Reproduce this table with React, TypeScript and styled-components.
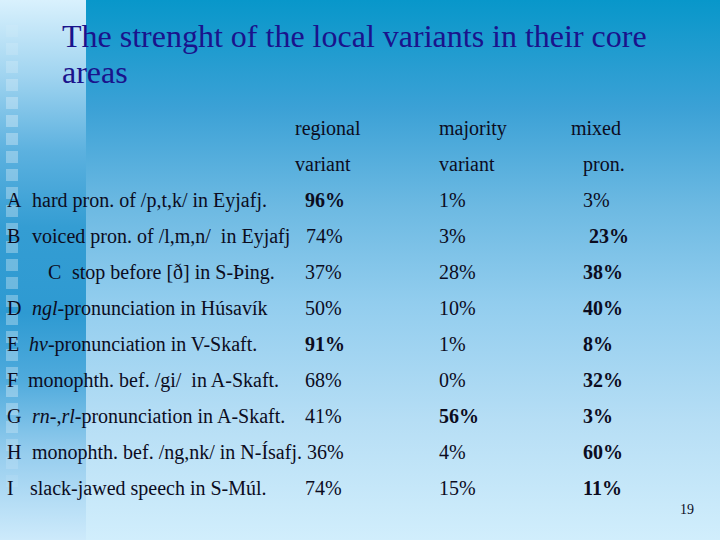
import React, { ReactNode } from 'react';
import styled, { createGlobalStyle } from 'styled-components';

const GlobalStyle = createGlobalStyle`
   html, body {
      margin: 0;
      padding: 0;
      background: #ffffff;
   }
   body {
      font-family: "Liberation Serif", "Times New Roman", serif;
   }
`;

const Slide = styled.div`
   display: grid;
   width: 720px;
   height: 540px;
   overflow: hidden;
   font-family: "Liberation Serif", "Times New Roman", serif;
`;

const Backdrop = styled.div`
   grid-area: 1 / 1;
   display: flex;
`;

const Strip = styled.div`
   width: 86px;
   flex-shrink: 0;
   display: flex;
   flex-direction: column;
   gap: 6px;
   padding: 25px 0 0 6px;
   box-sizing: border-box;
   background: linear-gradient(
      to bottom,
      #d9f1fd 0%,
      #a0d4f0 14%,
      #5cb1df 28%,
      #349dd3 42%,
      #2e9ad2 58%,
      #4eaadc 70%,
      #96cdee 84%,
      #cdeafb 100%
   );
`;

const Square = styled.span<{ $alpha: number }>`
   width: 12px;
   height: 12px;
   flex-shrink: 0;
   background: rgba(255, 255, 255, ${({ $alpha }) => $alpha});
`;

const Main = styled.div`
   flex: 1;
   background: linear-gradient(
      to bottom,
      #0897ca 0%,
      #3ba1d6 20%,
      #6cb9e2 38%,
      #92cdee 56%,
      #b6def5 78%,
      #d1eefc 100%
   );
`;

const Content = styled.div`
   grid-area: 1 / 1;
   position: relative;
   z-index: 1;
   display: flex;
   flex-direction: column;
   padding: 18px 0 0 7px;
`;

const Title = styled.h1`
   margin: 0 0 20px 55px;
   font-size: 32px;
   line-height: 36px;
   font-weight: normal;
   color: #1a138c;
`;

const Table = styled.div`
   display: grid;
   grid-template-columns: 288px 144px 132px 1fr;
   grid-auto-rows: 36px;
   font-size: 20px;
   line-height: 36px;
   color: #0c0c1e;
`;

const HeadCell = styled.div<{ $pad?: number }>`
   padding-left: ${({ $pad }) => $pad ?? 0}px;
   white-space: nowrap;
`;

const LabelCell = styled.div<{ $indent?: number }>`
   display: flex;
   padding-left: ${({ $indent }) => $indent ?? 0}px;
   white-space: pre;
   min-width: 0;
`;

const Letter = styled.span<{ $w?: number }>`
   width: ${({ $w }) => $w ?? 25}px;
   flex-shrink: 0;
`;

const ValueCell = styled.div<{ $pad?: number; $bold?: boolean }>`
   padding-left: ${({ $pad }) => $pad ?? 0}px;
   font-weight: ${({ $bold }) => ($bold ? 'bold' : 'normal')};
   white-space: nowrap;
`;

const Footer = styled.div`
   display: flex;
   justify-content: flex-end;
   padding-right: 26px;
   margin-top: -4px;
   font-size: 14px;
   line-height: 16px;
   color: #0c0c1e;
`;

type Value = { v: string; bold?: boolean; pad?: number };

interface Row {
   letter: string;
   w?: number;
   indent?: number;
   label: ReactNode;
   values: [Value, Value, Value];
}

const rows: Row[] = [
   {
      letter: 'A',
      label: 'hard pron. of /p,t,k/ in Eyjafj.',
      values: [{ v: '96%', bold: true }, { v: '1%' }, { v: '3%' }],
   },
   {
      letter: 'B',
      label: 'voiced pron. of /l,m,n/  in Eyjafj',
      values: [{ v: '74%', pad: 11 }, { v: '3%' }, { v: '23%', bold: true, pad: 18 }],
   },
   {
      letter: 'C',
      w: 24,
      indent: 41,
      label: 'stop before [ð] in S-Þing.',
      values: [{ v: '37%' }, { v: '28%' }, { v: '38%', bold: true }],
   },
   {
      letter: 'D',
      label: (
         <>
            <i>ngl</i>-pronunciation in Húsavík
         </>
      ),
      values: [{ v: '50%' }, { v: '10%' }, { v: '40%', bold: true }],
   },
   {
      letter: 'E',
      w: 22,
      label: (
         <>
            <i>hv</i>-pronunciation in V-Skaft.
         </>
      ),
      values: [{ v: '91%', bold: true }, { v: '1%' }, { v: '8%', bold: true }],
   },
   {
      letter: 'F',
      w: 21,
      label: 'monophth. bef. /gi/  in A-Skaft.',
      values: [{ v: '68%' }, { v: '0%' }, { v: '32%', bold: true }],
   },
   {
      letter: 'G',
      label: (
         <>
            <i>rn-</i>,<i>rl-</i>pronunciation in A-Skaft.
         </>
      ),
      values: [{ v: '41%' }, { v: '56%', bold: true }, { v: '3%', bold: true }],
   },
   {
      letter: 'H',
      label: 'monophth. bef. /ng,nk/ in N-Ísafj.',
      values: [{ v: '36%', pad: 12 }, { v: '4%' }, { v: '60%', bold: true }],
   },
   {
      letter: 'I',
      w: 23,
      label: 'slack-jawed speech in S-Múl.',
      values: [{ v: '74%' }, { v: '15%' }, { v: '11%', bold: true }],
   },
];

const pads = [10, 0, 12];

// squares fade in near the top and out near the bottom of the strip
const squareAlpha = (i: number, n: number) =>
   Math.min(0.3, 0.08 + i * 0.05, 0.08 + (n - 1 - i) * 0.05);

export default function App() {
   const count = 26;
   return (
      <>
         <GlobalStyle />
         <Slide>
            <Backdrop>
               <Strip>
                  {Array.from({ length: count }, (_, i) => (
                     <Square key={i} $alpha={squareAlpha(i, count)} />
                  ))}
               </Strip>
               <Main />
            </Backdrop>
            <Content>
               <Title>
                  The strenght of the local variants in their core areas
               </Title>
               <Table>
                  <HeadCell />
                  <HeadCell>regional</HeadCell>
                  <HeadCell>majority</HeadCell>
                  <HeadCell>mixed</HeadCell>

                  <HeadCell />
                  <HeadCell>variant</HeadCell>
                  <HeadCell>variant</HeadCell>
                  <HeadCell $pad={12}>pron.</HeadCell>

                  {rows.map((row) => (
                     <React.Fragment key={row.letter}>
                        <LabelCell $indent={row.indent}>
                           <Letter $w={row.w}>{row.letter}</Letter>
                           <span>{row.label}</span>
                        </LabelCell>
                        {row.values.map((val, i) => (
                           <ValueCell
                              key={i}
                              $pad={val.pad ?? pads[i]}
                              $bold={val.bold}
                           >
                              {val.v}
                           </ValueCell>
                        ))}
                     </React.Fragment>
                  ))}
               </Table>
               <Footer>19</Footer>
            </Content>
         </Slide>
      </>
   );
}
